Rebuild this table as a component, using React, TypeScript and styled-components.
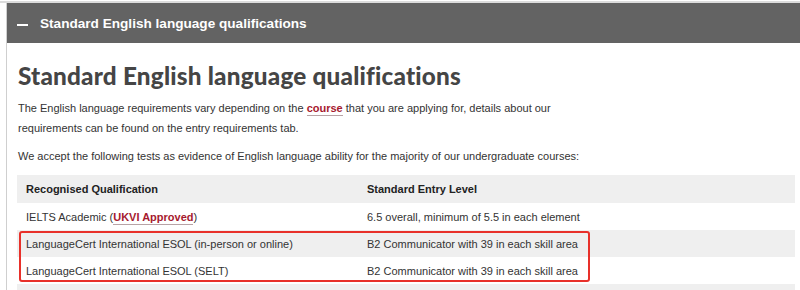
import styled, { createGlobalStyle } from "styled-components";

const GlobalStyle = createGlobalStyle`
    html, body {
        margin: 0;
        padding: 0;
        background: #fff;
        font-family: "Liberation Sans", Arial, sans-serif;
    }
`;

const Page = styled.div`
    padding-top: 1px;
    overflow: hidden;
    height: 289px;
`;

const TopRule = styled.div`
    height: 2px;
    background: #dcdcdc;
`;

const Panel = styled.section`
    margin-left: 6px;
    border-left: 1px solid #cfcfcf;
`;

const Bar = styled.div`
    display: flex;
    align-items: center;
    gap: 12px;
    height: 40px;
    padding-left: 10px;
    background: #636363;
    color: #fff;
    font: bold 13.6px "Liberation Sans", Arial, sans-serif;
`;

const Dash = styled.span`
    display: block;
    width: 11px;
    height: 2px;
    margin-top: 3px;
    background: #fff;
`;

const Body = styled.div`
    padding: 17px 5px 0 10px;
`;

const Heading = styled.h1`
    margin: 0 0 0 1px;
    font: 900 24.3px Lato, "Open Sans", sans-serif;
    letter-spacing: 0.2px;
    color: #454545;
    line-height: 32px;
`;

const Para = styled.p`
    margin: 6px 0 0 1px;
    font-size: 11px;
    line-height: 20px;
    color: #333;
    & + & {
        margin-top: 8px;
    }
`;

const Link = styled.a`
    color: #a6192e;
    font-weight: bold;
    text-decoration: none;
    border-bottom: 1px solid #b7a3a6;
    padding-bottom: 1px;
`;

const TableWrap = styled.div`
    position: relative;
    margin-top: 9px;
`;

const Table = styled.table`
    width: 778px;
    table-layout: fixed;
    border-collapse: collapse;
    font-size: 11px;
    color: #333;
`;

const Row = styled.tr<{ $shade: boolean }>`
    background: ${(p) => (p.$shade ? "#efefef" : "#fff")};
`;

const Th = styled.th<{ $w: number }>`
    width: ${(p) => p.$w}px;
    text-align: left;
    font-weight: bold;
    color: #222;
    padding: 7px 9px;
    line-height: 14px;
`;

const Td = styled.td`
    padding: 7px 9px 6px;
    line-height: 14px;
`;

const Highlight = styled.div`
    position: absolute;
    left: 2px;
    top: 56px;
    width: 571px;
    height: 51px;
    box-sizing: border-box;
    border: 2px solid #e8302a;
    border-radius: 3px;
    pointer-events: none;
`;

const rows: { q: React.ReactNode; level: string }[] = [
    {
        q: (
            <>
                IELTS Academic (<Link href="#">UKVI Approved</Link>)
            </>
        ),
        level: "6.5 overall, minimum of 5.5 in each element",
    },
    {
        q: "LanguageCert International ESOL (in-person or online)",
        level: "B2 Communicator with 39 in each skill area",
    },
    {
        q: "LanguageCert International ESOL (SELT)",
        level: "B2 Communicator with 39 in each skill area",
    },
    {
        q: "\u00a0",
        level: "\u00a0",
    },
];

export default function App() {
    return (
        <Page>
            <GlobalStyle />
            <TopRule />
            <Panel>
                <Bar>
                    <Dash />
                    Standard English language qualifications
                </Bar>
                <Body>
                    <Heading>Standard English language qualifications</Heading>
                    <Para>
                        The English language requirements vary depending on the{" "}
                        <Link href="#">course</Link> that you are applying for, details about our
                        <br />
                        requirements can be found on the entry requirements tab.
                    </Para>
                    <Para>
                        We accept the following tests as evidence of English language ability for the
                        majority of our undergraduate courses:
                    </Para>
                    <TableWrap>
                        <Table>
                            <thead>
                                <Row $shade>
                                    <Th $w={323}>Recognised Qualification</Th>
                                    <Th $w={419}>Standard Entry Level</Th>
                                </Row>
                            </thead>
                            <tbody>
                                {rows.map((r, i) => (
                                    <Row key={i} $shade={i % 2 === 1}>
                                        <Td>{r.q}</Td>
                                        <Td>{r.level}</Td>
                                    </Row>
                                ))}
                            </tbody>
                        </Table>
                        <Highlight />
                    </TableWrap>
                </Body>
            </Panel>
        </Page>
    );
}
